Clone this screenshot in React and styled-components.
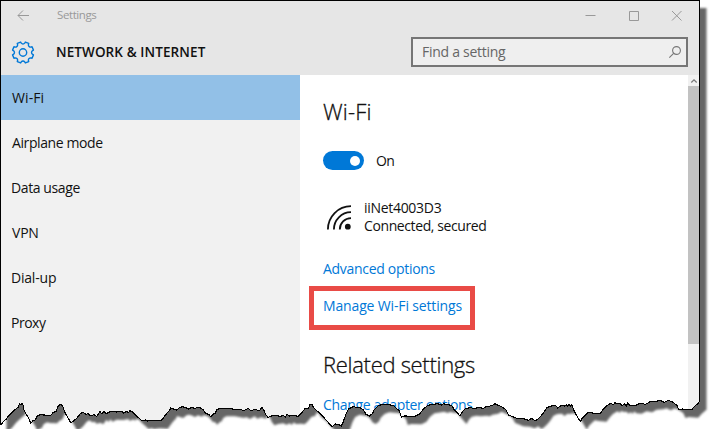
import React from "react";
import styled, { createGlobalStyle } from "styled-components";

const GlobalStyle = createGlobalStyle`
  *, *::before, *::after { box-sizing: border-box; }
  body { margin: 0; background: #fff; overflow: hidden; }
`;

const Stage = styled.div`
  position: relative;
  width: 715px;
  height: 429px;
  overflow: hidden;
  background: #fff;
  font-family: "Open Sans", "Noto Sans", sans-serif;
  color: #111;
`;

const Window = styled.div`
  width: 700px;
  height: 429px;
  border: 1px solid #000;
  border-bottom: 0;
  display: flex;
  flex-direction: column;
`;

const Header = styled.header`
  height: 74px;
  flex: none;
  background: #e6e6e6;
`;

const TitleBar = styled.div`
  display: flex;
  align-items: center;
  height: 28px;
  padding: 0 17px 0 16px;
`;

const Label = styled.span`
  display: block;
  white-space: nowrap;
  font-size: ${(p) => p.$size || 14}px;
  line-height: 18px;
  font-weight: ${(p) => p.$weight || 400};
  letter-spacing: ${(p) => p.$track || 0}px;
  color: ${(p) => p.$color || "inherit"};
`;

const WindowTitle = styled(Label)`
  margin-left: 28px;
  flex: 1;
`;

const Controls = styled.div`
  display: flex;
  gap: 32px;
`;

const Glyph = styled.svg`
  display: block;
  flex: none;
  overflow: visible;
  fill: none;
  stroke: ${(p) => p.$color || "#999"};
  stroke-width: ${(p) => p.$stroke || 1};
`;

const Heading = styled.div`
  display: flex;
  align-items: center;
  height: 46px;
  padding: 0 11px 0 10px;
`;

const PageName = styled(Label)`
  margin-left: 21px;
  flex: 1;
`;

const SearchBox = styled.div`
  display: flex;
  align-items: center;
  justify-content: space-between;
  width: 277px;
  height: 30px;
  padding: 0 5px 0 9px;
  border: 2px solid #767676;
  background: #efefef;
`;

const Body = styled.div`
  flex: 1;
  display: flex;
  min-height: 0;
`;

const Sidebar = styled.nav`
  width: 299px;
  background: #f1f1f1;
`;

const NavItem = styled.div`
  display: flex;
  align-items: center;
  height: 45px;
  padding: 0 0 0 ${(p) => p.$inset}px;
  background: ${(p) => (p.$active ? "#92c0e7" : "transparent")};
`;

const Content = styled.main`
  flex: 1;
  display: flex;
  flex-direction: column;
  align-items: flex-start;
  padding: 21px 0 0 23px;
  background: #fff;
`;

const Title = styled.h2`
  margin: 0;
  font-size: 22px;
  font-weight: 300;
  line-height: 30px;
  letter-spacing: ${(p) => p.$track}px;
  white-space: nowrap;
  -webkit-text-stroke: 0.3px #111;
`;

const ToggleRow = styled.div`
  display: flex;
  align-items: center;
  gap: 12px;
  margin-top: 25px;
`;

const Toggle = styled.div`
  display: flex;
  align-items: center;
  justify-content: flex-end;
  width: 41px;
  height: 19px;
  padding-right: 4px;
  border-radius: 10px;
  background: #0078d7;
`;

const Knob = styled.div`
  width: 10px;
  height: 10px;
  border-radius: 50%;
  background: #fff;
`;

const Network = styled.div`
  display: flex;
  align-items: center;
  gap: 13px;
  margin: 29px 0 0 4px;
`;

const Highlight = styled.div`
  width: 166px;
  height: 44px;
  margin: 8px 0 0 -14px;
  padding: 6px 0 0 9px;
  border: 5px solid #e94b46;
`;

const LinkWrap = styled.div`
  margin-top: ${(p) => p.$top}px;
`;

const Scrollbar = styled.div`
  width: 11px;
  background: #f1f1f1;
  display: flex;
  flex-direction: column;
`;

const ScrollArrow = styled.div`
  height: 11px;
  display: flex;
  align-items: center;
  justify-content: center;
`;

const Thumb = styled.div`
  height: 258px;
  background: #c2c2c2;
`;

const TearLayer = styled.svg`
  position: absolute;
  inset: 0;
  pointer-events: none;
`;

// Torn bottom edge, in runs of third-of-a-pixel steps from each run's origin.
const TEAR_RUNS = [
  { x: 0, y: 370, pts: "1,164 5,162 10,155 18,148 28,135 38,125 50,115 56,110 58,101 62,104 66,101 70,107 72,120 80,135 88,148 92,160 98,153 106,150 112,138 122,133 130,135 152,136 158,129 168,124 175,108 182,103 188,108 192,120 197,132 205,145 212,158 220,154 230,145 240,132 248,127 258,133 265,131 270,137 282,134 290,139 300,125 306,132 312,124 318,131 330,125 350,126 366,123 370,129 380,124 386,128 390,122 398,126 407,136 420,147 426,153 436,150 442,153 460,151 484,152 490,144 498,133 508,122 512,114 520,117 530,120" },
  { x: 180, y: 370, pts: "0,112 8,110 18,113 25,117 35,112 45,116 52,112 62,114 70,120 78,131 86,133 92,140 100,132 106,130 110,120 120,115 145,115 170,119 182,118 190,123 205,115 212,122 225,118 238,122 246,112 252,122 256,132 264,142 275,138 290,136 300,140 310,136 316,141 322,133 328,138 345,137 354,139 362,132 375,116 386,114 390,104 396,104 402,114 408,120 420,130 440,152 456,170 466,162 476,163 484,169 490,155 498,132 506,117 520,110 535,113" },
  { x: 360, y: 370, pts: "0,113 10,120 18,133 28,138 38,130 42,120 54,108 68,103 85,104 100,106 108,114 118,122 124,141 134,138 165,139 180,131 190,117 204,106 215,104 232,101 245,105 250,101 262,104 275,106 282,118 300,138 308,124 316,116 330,113 342,115 360,113 370,115 378,110 395,107 405,101 415,106 428,112 438,120 446,135 456,139 470,145 490,146 505,151 515,145" },
  { x: 535, y: 320, pts: "0,303 8,298 18,288 26,278 36,263 48,258 62,257 68,264 78,257 88,258 94,254 98,260 102,253 106,260 110,254 116,270 124,285 136,305 142,294 150,286 160,277 172,279 195,281 205,268 215,257 228,250 235,254 240,248 246,252 255,251 262,257 268,252 274,258 278,250 284,256 300,257 315,250 332,253 345,245 365,244 375,241 388,247 400,241 412,246 425,255 432,270 442,267 470,269 480,258 493,247" },
];

const tear = TEAR_RUNS.flatMap((run) =>
  run.pts.split(" ").map((pair) => {
    const [x, y] = pair.split(",").map(Number);
    return `${(run.x + x / 3).toFixed(1)},${(run.y + y / 3).toFixed(1)}`;
  })
).join(" L");

const sheet = `M0,0 L0,424.5 L${tear} L700,402 L700,0 Z`;
const outside = `M-10,-10 H725 V445 H-10 Z ${sheet}`;

function TornEdge() {
  return (
    <TearLayer width="715" height="429" viewBox="0 0 715 429">
      <defs>
        <clipPath id="outside">
          <path d={outside} clipRule="evenodd" />
        </clipPath>
        <filter id="soft" x="-5%" y="-5%" width="110%" height="110%">
          <feGaussianBlur stdDeviation="1.1" />
        </filter>
      </defs>
      <path d={outside} fill="#fff" fillRule="evenodd" />
      <g clipPath="url(#outside)">
        <path d={sheet} transform="translate(6.5 8)" fill="#666" filter="url(#soft)" />
      </g>
      <path d={`M${tear}`} fill="none" stroke="#000" strokeWidth="1.1" shapeRendering="crispEdges" />
    </TearLayer>
  );
}

// Eight blunt teeth joined by round valleys.
function gearPath() {
  const teeth = 8;
  const step = (2 * Math.PI) / teeth;
  const at = (r, a) => `${(12 + r * Math.cos(a)).toFixed(2)},${(11.5 + r * Math.sin(a)).toFixed(2)}`;
  let d = "";
  for (let i = 0; i < teeth; i++) {
    const c = i * step + step / 2;
    d += `${i ? "L" : "M"}${at(10.7, c - 0.17)} L${at(10.7, c + 0.17)} L${at(9.5, c + 0.21)} A2.3 2.3 0 0 0 ${at(9.5, c + step - 0.21)} `;
  }
  return `${d}Z`;
}

const NAV = [
  { name: "Wi-Fi", active: true, track: 0.1, inset: 11 },
  { name: "Airplane mode", track: -0.4, inset: 11 },
  { name: "Data usage", track: -0.4, inset: 10 },
  { name: "VPN", track: -0.2, inset: 11 },
  { name: "Dial-up", track: -0.2, inset: 10 },
  { name: "Proxy", track: -0.5, inset: 10 },
];

export default function App() {
  return (
    <Stage>
      <GlobalStyle />
      <Window>
        <Header>
          <TitleBar>
            <Glyph width="12" height="11" $color="#999">
              <path d="M12 5.5H1M6 .5L1 5.5L6 10.5" />
            </Glyph>
            <WindowTitle $size={11.5} $color="#999" $track={-0.4}>Settings</WindowTitle>
            <Controls>
              <Glyph width="11" height="11"><path d="M.5 5.5h10" /></Glyph>
              <Glyph width="11" height="11"><path d="M1.5 1.5h9v9h-9z" /></Glyph>
              <Glyph width="11" height="11"><path d="M1 1l9.5 9.5M10.5 1L1 10.5" /></Glyph>
            </Controls>
          </TitleBar>
          <Heading>
            <Glyph width="24" height="23" $color="#0078d7" $stroke={1.4} strokeLinejoin="round">
              <path d={gearPath()} />
              <circle cx="12" cy="11.5" r="3.7" />
            </Glyph>
            <PageName $size={13.5} $weight={600} $track={0.1}>NETWORK &amp; INTERNET</PageName>
            <SearchBox>
              <Label $color="#666" $track={-0.28}>Find a setting</Label>
              <Glyph width="12" height="12" $color="#777" $stroke={1.1}>
                <circle cx="7.5" cy="4.5" r="3.9" />
                <path d="M4.6 7.3L.3 11.7" />
              </Glyph>
            </SearchBox>
          </Heading>
        </Header>
        <Body>
          <Sidebar>
            {NAV.map((item) => (
              <NavItem key={item.name} $active={item.active} $inset={item.inset}>
                <Label $track={item.track}>{item.name}</Label>
              </NavItem>
            ))}
          </Sidebar>
          <Content>
            <Title $track={0.2}>Wi-Fi</Title>
            <ToggleRow>
              <Toggle><Knob /></Toggle>
              <Label $track={-0.6}>On</Label>
            </ToggleRow>
            <Network>
              <Glyph width="24" height="25" $color="#111" $stroke={1.8}>
                <path d="M.9 24.5A23.2 23.2 0 0 1 24 1.2M6.9 24.5A17.2 17.2 0 0 1 24 7.2M12.8 24.5A11.3 11.3 0 0 1 24 13.1" />
                <circle cx="20.8" cy="21.7" r="2.9" fill="#111" stroke="none" />
              </Glyph>
              <div>
                <Label $track={-0.3}>iiNet4003D3</Label>
                <Label $track={-0.4}>Connected, secured</Label>
              </div>
            </Network>
            <LinkWrap $top={25}>
              <Label $color="#0078d7" $track={-0.3}>Advanced options</Label>
            </LinkWrap>
            <Highlight>
              <Label $color="#0078d7" $track={-0.15}>Manage Wi-Fi settings</Label>
            </Highlight>
            <LinkWrap $top={19}>
              <Title $track={-0.3}>Related settings</Title>
            </LinkWrap>
            <LinkWrap $top={17}>
              <Label $color="#0078d7" $track={-0.33}>Change adapter options</Label>
            </LinkWrap>
          </Content>
          <Scrollbar>
            <ScrollArrow>
              <Glyph width="6" height="4" $color="#777" $stroke={1.2}><path d="M.3 3.5L3 .8L5.7 3.5" /></Glyph>
            </ScrollArrow>
            <Thumb />
          </Scrollbar>
        </Body>
      </Window>
      <TornEdge />
    </Stage>
  );
}
